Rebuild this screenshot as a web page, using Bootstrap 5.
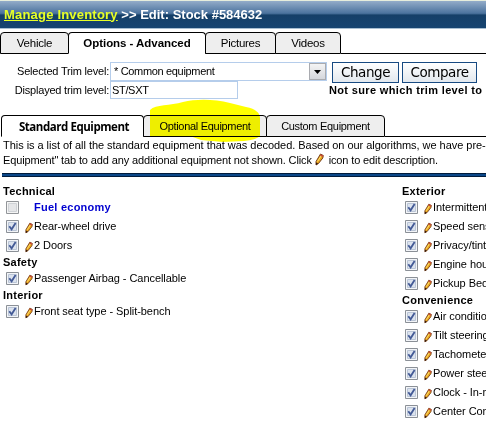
<!DOCTYPE html>
<html lang="en">
<head>
<meta charset="utf-8">
<meta name="viewport" content="width=device-width, initial-scale=1">
<title>Manage Inventory</title>
<link href="https://cdn.jsdelivr.net/npm/bootstrap@5.3.0/dist/css/bootstrap.min.css" rel="stylesheet">
<style>
body{font:11px/15px "Liberation Sans",Arial,sans-serif;color:#000;background:#fff;width:486px;height:425px;letter-spacing:-.06px}
.page-head{height:28px;padding:0 0 1px 4px;font-size:13px;letter-spacing:0;color:#fff;border-top:1px solid #e6eddc;background:linear-gradient(#93acc9 0,#4c739e 45%,#426a94 47%,#153f68 52%,#164471 100%)}
.page-head a{color:#e8ff26;letter-spacing:.2px}
.head-rule{height:1px;background:#a9bfd2}
.tabset{height:22px}
.tabset .tab{border:1px solid #000;border-radius:4px 4px 0 0;background:#eee;margin-left:-1px;height:22px;white-space:nowrap}
.tabset .tab:first-child{margin-left:0}
.tabset .tab.on{background:#fff;border-bottom-color:#fff;font-weight:700}
.tabset .rest{border-bottom:1px solid #000}
.w-a{width:69px}.w-b{width:138px}.w-c{width:71px}.w-d{width:66px}
.w-e{width:143px}.w-f{width:124px}.w-g{width:119px}
.top-tabs{margin-top:3px;font-size:11.5px;letter-spacing:-.25px}
.top-tabs .on{letter-spacing:-.05px}
.sub-tabs{margin:15px 0 0 1px;letter-spacing:-.3px}
.sub-tabs .on{font:700 11.5px/15px "Open Sans",sans-serif;letter-spacing:-.45px;padding-left:3px}
.trim{margin-top:8px;height:38px}
.trim-labels{width:109px;margin-right:1px;white-space:nowrap;letter-spacing:-.2px}
.trim-labels div{height:19px;line-height:19px}
.fields{width:217px;letter-spacing:-.33px}
.pick{height:19px;border:1px solid #b5cdeb;padding-left:3px}
.pick .arrow{width:17px;height:17px;border:1px solid #a9abb0;background:linear-gradient(#f4f4f4,#d5d7dc)}
.entry{height:18px;width:128px;border:1px solid #b5cdeb;padding-left:1px}
.acts{padding-left:5px;gap:3px}
.act{height:21px;border:1px solid #174a82;background:linear-gradient(#fff,#e2e8ee);font:13.5px/18px "DejaVu Sans",sans-serif;letter-spacing:-.45px;white-space:nowrap}
.act-a{width:67px}.act-b{width:75px}
.hint{padding-left:2px;letter-spacing:.35px}
.intro{padding:0 0 0 3px;margin-top:1px;white-space:nowrap;letter-spacing:-.04px}
.intro .second{letter-spacing:-.13px}
.intro svg{width:9px;height:13px;vertical-align:-2px;margin:-2px 2px 0 0}
.divide{height:4px;margin:5px 0 0 2px;background:#0b4788;border-top:1px solid #001c3c;border-bottom:1px solid #001c3c}
.equip{padding:7px 0 0 3px}
.left-list{width:399px}
.equip h2{font-size:11px;line-height:14px;height:14px;margin:0;font-weight:700;letter-spacing:.25px}
.item{height:19px;padding-left:3px;white-space:nowrap}
.box{width:13px;height:13px;flex:none}
.pen{width:8px;height:12px;margin:2px 1px 0 6px;flex:none}
.fuel{color:#0000d0;font-weight:700;margin-left:15px;letter-spacing:.25px}
.marker{left:148px;top:98px;width:114px;height:46px;mix-blend-mode:multiply}
</style>
<script src="https://cdn.jsdelivr.net/npm/bootstrap@5.3.0/dist/js/bootstrap.bundle.min.js"></script>
</head>
<body class="position-relative overflow-hidden">
<svg class="d-none">
<symbol id="pen" viewBox="0 0 9 12"><path d="M5.5.5 8.3 2 7.8 4.5 3.5 10 1 11.5V8z" fill="#e9a51c" stroke="#6b3212" stroke-width=".9"/><path d="M6.3 2.2 2.5 8" stroke="#ffe678"/><path d="M5.5.7 8.3 2.2 7.5 3.6 5 2z" fill="#c9473c"/><path d="M1 9v2.5L3.2 10" fill="#301a12"/></symbol>
<symbol id="off" viewBox="0 0 13 13"><path d="M.5.5h12v12H.5z" fill="#f5f5f5" stroke="#929599"/><path d="M2.5 2.5h8v8h-8z" fill="#e5e6e8" stroke="#cfd2d6"/></symbol>
<symbol id="on" viewBox="0 0 13 13"><path d="M.5.5h12v12H.5z" fill="#f3f5f8" stroke="#8b9097"/><path d="M2.5 2.5h8v8h-8z" fill="#dce3ee" stroke="#bac5d6"/><path d="M3.3 6.2 5.6 9.3 9.6 3" fill="none" stroke="#435a96" stroke-width="1.8"/></symbol>
</svg>
<header class="page-head d-flex align-items-center fw-bold"><div><a href="#">Manage Inventory</a> &gt;&gt; Edit: Stock #584632</div></header>
<div class="head-rule"></div>
<nav class="tabset top-tabs d-flex">
<div class="tab w-a d-flex align-items-center justify-content-center"><span>Vehicle</span></div>
<div class="tab on w-b d-flex align-items-center justify-content-center"><span>Options - Advanced</span></div>
<div class="tab w-c d-flex align-items-center justify-content-center"><span>Pictures</span></div>
<div class="tab w-d d-flex align-items-center justify-content-center"><span>Videos</span></div>
<div class="rest flex-grow-1"></div>
</nav>
<section class="trim d-flex">
<div class="trim-labels text-end flex-shrink-0"><div><span>Selected Trim level:</span></div><div><span>Displayed trim level:</span></div></div>
<div class="fields flex-shrink-0">
<div class="pick d-flex align-items-center justify-content-between"><span>* Common equipment</span><span class="arrow d-flex align-items-center justify-content-center"><svg width="7" height="4"><path d="M0 0h7L3.5 4z"/></svg></span></div>
<div class="entry d-flex align-items-center"><span>ST/SXT</span></div>
</div>
<div class="flex-shrink-0">
<div class="d-flex acts"><div class="act act-a text-center"><span>Change</span></div><div class="act act-b text-center"><span>Compare</span></div></div>
<div class="fw-bold text-nowrap hint">Not sure which trim level to s</div>
</div>
</section>
<nav class="tabset sub-tabs d-flex">
<div class="tab on w-e d-flex align-items-center justify-content-center"><span>Standard Equipment</span></div>
<div class="tab w-f d-flex align-items-center justify-content-center"><span>Optional Equipment</span></div>
<div class="tab w-g d-flex align-items-center justify-content-center"><span>Custom Equipment</span></div>
<div class="rest flex-grow-1"></div>
</nav>
<div class="intro"><div>This is a list of all the standard equipment that was decoded. Based on our algorithms, we have pre-</div><div class="second">Equipment" tab to add any additional equipment not shown. Click <svg><use href="#pen"/></svg> icon to edit description.</div></div>
<div class="divide"></div>
<main class="equip d-flex">
<div class="left-list flex-shrink-0">
<h2>Technical</h2>
<div class="item d-flex align-items-center"><svg class="box"><use href="#off"/></svg><span class="fuel">Fuel economy</span></div>
<div class="item d-flex align-items-center"><svg class="box"><use href="#on"/></svg><svg class="pen"><use href="#pen"/></svg><span>Rear-wheel drive</span></div>
<div class="item d-flex align-items-center"><svg class="box"><use href="#on"/></svg><svg class="pen"><use href="#pen"/></svg><span>2 Doors</span></div>
<h2>Safety</h2>
<div class="item d-flex align-items-center"><svg class="box"><use href="#on"/></svg><svg class="pen"><use href="#pen"/></svg><span>Passenger Airbag - Cancellable</span></div>
<h2>Interior</h2>
<div class="item d-flex align-items-center"><svg class="box"><use href="#on"/></svg><svg class="pen"><use href="#pen"/></svg><span>Front seat type - Split-bench</span></div>
</div>
<div class="flex-shrink-0">
<h2>Exterior</h2>
<div class="item d-flex align-items-center"><svg class="box"><use href="#on"/></svg><svg class="pen"><use href="#pen"/></svg><span>Intermittent</span></div>
<div class="item d-flex align-items-center"><svg class="box"><use href="#on"/></svg><svg class="pen"><use href="#pen"/></svg><span>Speed sens</span></div>
<div class="item d-flex align-items-center"><svg class="box"><use href="#on"/></svg><svg class="pen"><use href="#pen"/></svg><span>Privacy/tint</span></div>
<div class="item d-flex align-items-center"><svg class="box"><use href="#on"/></svg><svg class="pen"><use href="#pen"/></svg><span>Engine hou</span></div>
<div class="item d-flex align-items-center"><svg class="box"><use href="#on"/></svg><svg class="pen"><use href="#pen"/></svg><span>Pickup Bed</span></div>
<h2>Convenience</h2>
<div class="item d-flex align-items-center"><svg class="box"><use href="#on"/></svg><svg class="pen"><use href="#pen"/></svg><span>Air conditio</span></div>
<div class="item d-flex align-items-center"><svg class="box"><use href="#on"/></svg><svg class="pen"><use href="#pen"/></svg><span>Tilt steering</span></div>
<div class="item d-flex align-items-center"><svg class="box"><use href="#on"/></svg><svg class="pen"><use href="#pen"/></svg><span>Tachomete</span></div>
<div class="item d-flex align-items-center"><svg class="box"><use href="#on"/></svg><svg class="pen"><use href="#pen"/></svg><span>Power stee</span></div>
<div class="item d-flex align-items-center"><svg class="box"><use href="#on"/></svg><svg class="pen"><use href="#pen"/></svg><span>Clock - In-ra</span></div>
<div class="item d-flex align-items-center"><svg class="box"><use href="#on"/></svg><svg class="pen"><use href="#pen"/></svg><span>Center Con</span></div>
</div>
</main>
<svg class="marker position-absolute" viewBox="0 0 114 46"><path d="M2 12C8 6 22 8 35 4C48 1 66 1 82 5L98 9C108 11 112 15 112 20V38Q108 42 96 43L75 44 53 42 42 38H2Z" fill="#ff0"/></svg>
</body>
</html>
